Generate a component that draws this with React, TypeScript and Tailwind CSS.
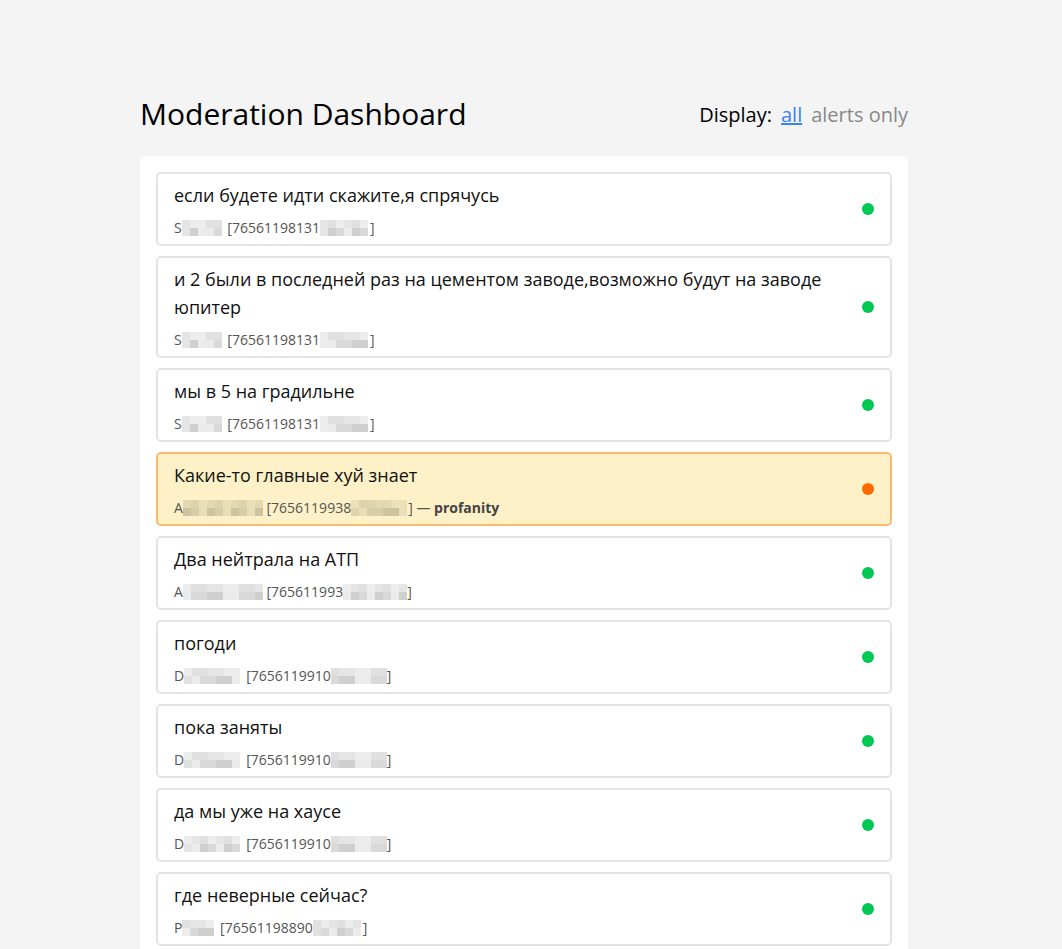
import React from "react";

type Msg = {
  text: string;
  initial: string;
  nameBlur: number;
  id: string;
  idBlur: number;
  alert?: string;
  tight?: boolean;
};

const messages: Msg[] = [
  { text: "если будете идти скажите,я спрячусь", initial: "S", nameBlur: 42, id: "76561198131", idBlur: 50 },
  { text: "и 2 были в последней раз на цементом заводе,возможно будут на заводе юпитер", initial: "S", nameBlur: 42, id: "76561198131", idBlur: 50 },
  { text: "мы в 5 на градильне", initial: "S", nameBlur: 42, id: "76561198131", idBlur: 50 },
  { text: "Какие-то главные хуй знает", initial: "A", nameBlur: 80, id: "7656119938", idBlur: 57, alert: "profanity" },
  { text: "Два нейтрала на АТП", initial: "A", nameBlur: 80, id: "765611993", idBlur: 64 },
  { text: "погоди", initial: "D", nameBlur: 62, id: "7656119910", idBlur: 56, tight: true },
  { text: "пока заняты", initial: "D", nameBlur: 62, id: "7656119910", idBlur: 56, tight: true },
  { text: "да мы уже на хаусе", initial: "D", nameBlur: 62, id: "7656119910", idBlur: 56, tight: true },
  { text: "где неверные сейчас?", initial: "P", nameBlur: 34, id: "76561198890", idBlur: 50 },
];

const shades = ["bg-black/[0.10]", "bg-black/[0.15]", "bg-black/[0.07]", "bg-black/[0.19]", "bg-black/[0.12]", "bg-black/[0.08]"];

// pixelated redaction, like the original screenshot
function Blur({ w, seed }: { w: number; seed: number }) {
  const cols = Math.ceil(w / 8);
  const cells = [];
  for (let r = 0; r < 2; r++) {
    for (let c = 0; c < cols; c++) {
      const k = (c * 7 + r * 3 + seed * 5 + ((c * c + seed) % 4)) % shades.length;
      cells.push(<span key={r + "-" + c} className={"h-2 w-2 " + shades[k]} />);
    }
  }
  return (
    <span
      className="inline-flex flex-wrap align-middle overflow-hidden h-4 -mt-[2px]"
      style={{ width: w }}
    >
      {cells}
    </span>
  );
}

function Row({ m, i }: { m: Msg; i: number }) {
  const alert = !!m.alert;
  return (
    <div
      className={
        "flex items-center gap-4 rounded-[5px] border-2 px-4 py-[7px] " +
        (alert ? "bg-[#fef1c7] border-[#fcba6f]" : "bg-white border-[#e4e4e4]")
      }
    >
      <div className="flex-1 min-w-0">
        <div className="text-[18px] leading-[28px] text-[#111]">{m.text}</div>
        <div className="mt-[10px] text-[14px] leading-[18px] text-[#555]">
          {m.initial}
          <Blur w={m.nameBlur} seed={i} />
          {m.tight ? "" : " "}[{m.id}
          <Blur w={m.idBlur} seed={i + 3} />]
          {alert && (
            <>
              {" — "}
              <b className="font-bold text-[#444]">{m.alert}</b>
            </>
          )}
        </div>
      </div>
      <span className={"h-3 w-3 rounded-full shrink-0 " + (alert ? "bg-[#ff6a00]" : "bg-[#00c853]")} />
    </div>
  );
}

export default function App() {
  return (
    <div className="min-h-screen bg-[#f4f4f4] font-['Open_Sans',sans-serif]">
      <div className="ml-[140px] w-[768px] pt-[94px]">
        <header className="flex items-center justify-between mb-[22px]">
          <h1 className="text-[30px] leading-[40px] text-black">Moderation Dashboard</h1>
          <div className="flex items-center gap-[9px] text-[20px] pt-[1px]">
            <span className="text-black">Display:</span>
            <a className="text-[#3b82f6] underline">all</a>
            <a className="text-[#888]">alerts only</a>
          </div>
        </header>
        <div className="rounded-lg bg-white p-4 flex flex-col gap-[10px]">
          {messages.map((m, i) => (
            <Row key={i} m={m} i={i} />
          ))}
        </div>
      </div>
    </div>
  );
}
